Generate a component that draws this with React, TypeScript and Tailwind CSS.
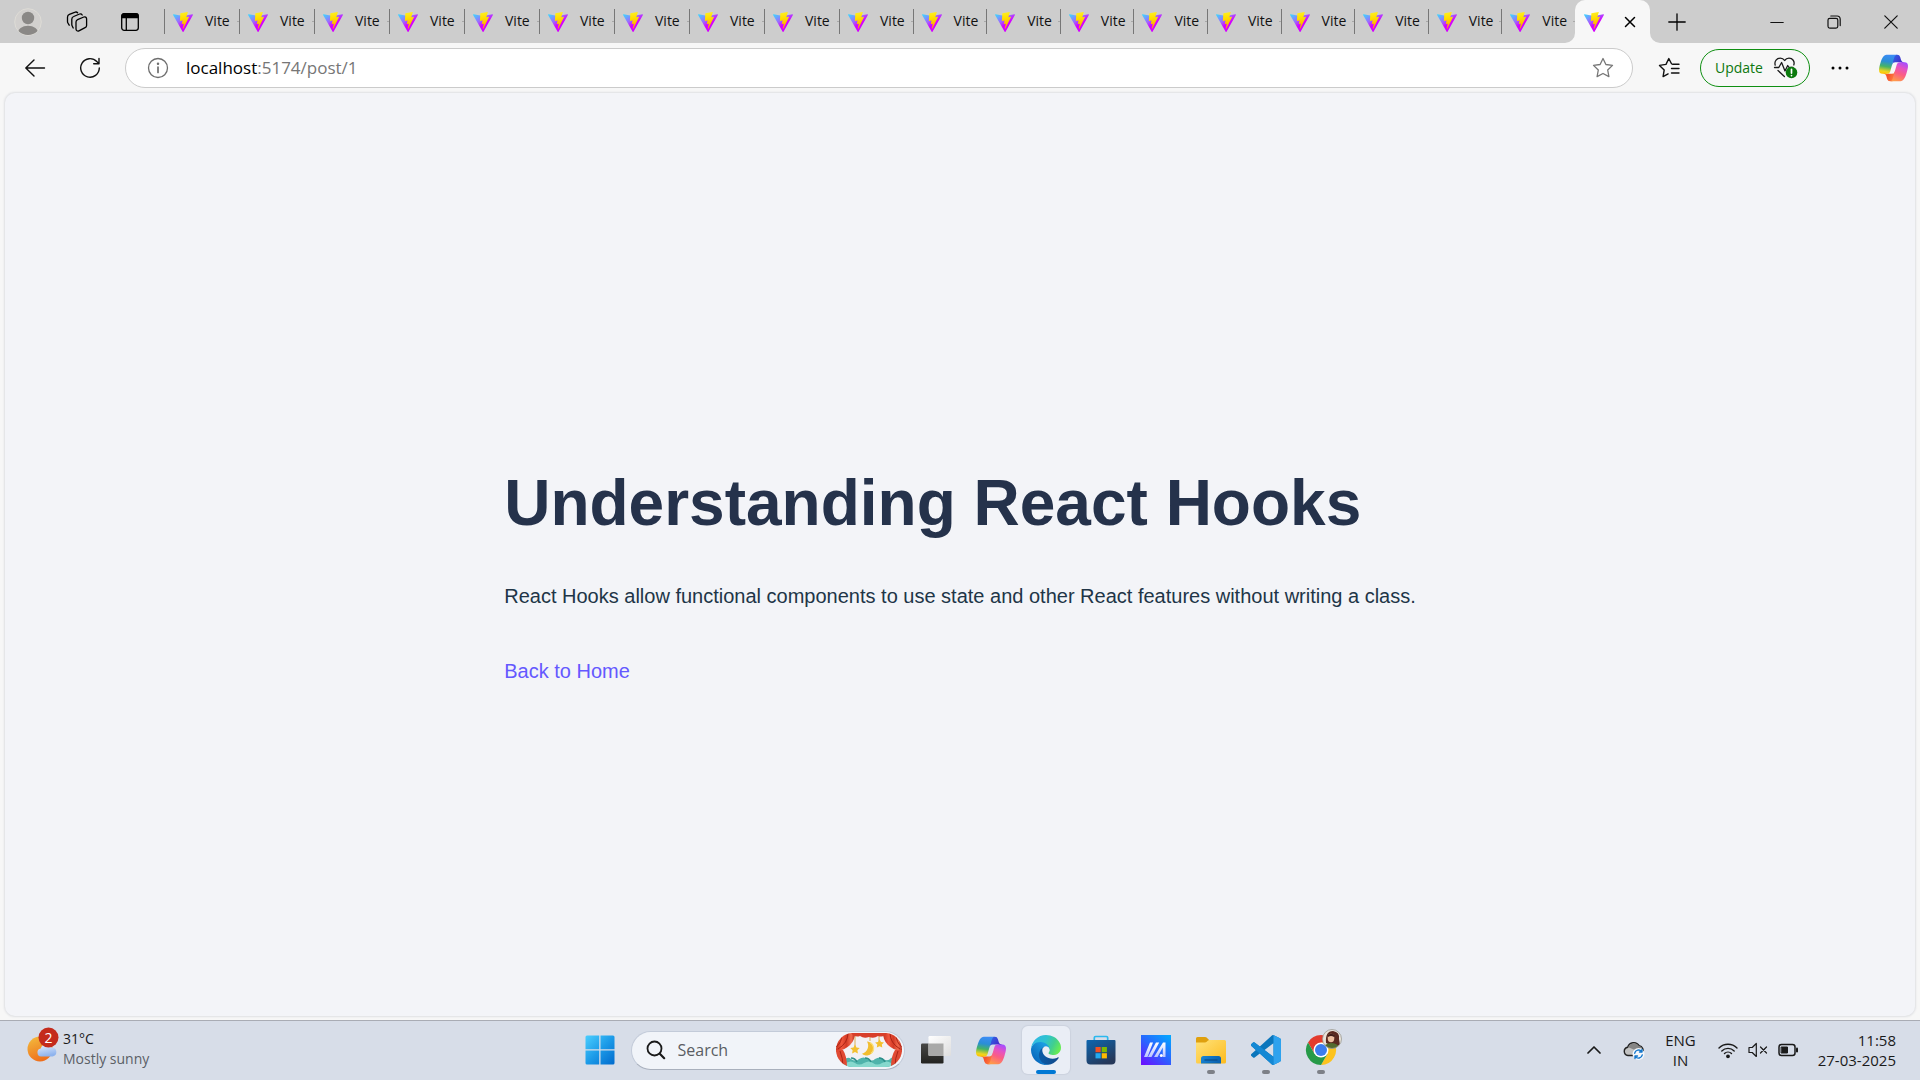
import React from "react";

const ui = "font-['Open_Sans','Noto_Sans',sans-serif]";

function ViteLogo({ id }: { id: string }) {
  return (
    <svg viewBox="0 0 256 257" className="size-5 shrink-0" aria-hidden="true">
      <defs>
        <linearGradient id={`${id}a`} x1="0%" y1="8%" x2="57.6%" y2="78.4%">
          <stop offset="0" stopColor="#41d1ff" />
          <stop offset="0.5" stopColor="#a066ff" />
          <stop offset="0.8" stopColor="#d400ff" />
          <stop offset="1" stopColor="#d400ff" />
        </linearGradient>
        <linearGradient id={`${id}b`} x1="43.4%" y1="2.2%" x2="50.3%" y2="89%">
          <stop offset="0" stopColor="#ffee20" />
          <stop offset="0.4" stopColor="#ffdd00" />
          <stop offset="1" stopColor="#ffa800" />
        </linearGradient>
      </defs>
      <path
        fill={`url(#${id}a)`}
        d="M255.153 37.938L134.897 252.976c-2.483 4.44-8.862 4.466-11.382.048L.875 37.958c-2.746-4.814 1.371-10.646 6.827-9.67l120.385 21.517a6.537 6.537 0 0 0 2.322-.004l117.867-21.483c5.438-.991 9.574 4.796 6.877 9.62Z"
      />
      <path
        fill={`url(#${id}b)`}
        d="M185.432.063L96.44 17.501a3.268 3.268 0 0 0-2.634 3.014l-5.474 92.456a3.268 3.268 0 0 0 3.997 3.378l24.777-5.718c2.318-.535 4.413 1.507 3.936 3.838l-7.361 36.047c-.495 2.426 1.782 4.5 4.151 3.78l15.304-4.649c2.372-.72 4.652 1.36 4.15 3.788l-11.698 56.621c-.732 3.542 3.979 5.473 5.943 2.437l1.313-2.028l72.516-144.72c1.215-2.423-.88-5.186-3.54-4.672l-25.505 4.922c-2.396.462-4.435-1.77-3.759-4.114l16.646-57.705c.677-2.35-1.37-4.583-3.769-4.113Z"
      />
    </svg>
  );
}

function CopilotLogo({ id, className }: { id: string; className: string }) {
  return (
    <svg viewBox="2 3 44 42" className={className} aria-hidden="true">
      <defs>
        <linearGradient id={`${id}a`} x1="0" y1="0" x2="1" y2="0.6">
          <stop offset="0" stopColor="#2b6ce8" />
          <stop offset="1" stopColor="#4a1fc4" />
        </linearGradient>
        <linearGradient id={`${id}b`} x1="0" y1="0" x2="1" y2="0.4">
          <stop offset="0" stopColor="#ffa53d" />
          <stop offset="0.5" stopColor="#f4502c" />
          <stop offset="1" stopColor="#ff7a3c" />
        </linearGradient>
        <linearGradient id={`${id}c`} x1="0.5" y1="0" x2="0.35" y2="1">
          <stop offset="0" stopColor="#3b8cf5" />
          <stop offset="0.35" stopColor="#2a8ed6" />
          <stop offset="0.62" stopColor="#45b465" />
          <stop offset="0.88" stopColor="#f0d420" />
          <stop offset="1" stopColor="#ffc400" />
        </linearGradient>
        <linearGradient id={`${id}d`} x1="0.75" y1="0" x2="0.35" y2="1">
          <stop offset="0" stopColor="#a64dff" />
          <stop offset="0.3" stopColor="#e452c4" />
          <stop offset="0.6" stopColor="#fb5d84" />
          <stop offset="1" stopColor="#ff9a4a" />
        </linearGradient>
      </defs>
      <path fill={`url(#${id}a)`} d="M34.142 7.325A4.63 4.63 0 0 0 29.7 4H28.35a4.63 4.63 0 0 0-4.554 3.794L21.48 20.407l.575-1.965a4.63 4.63 0 0 1 4.444-3.33h7.853l3.294 1.282 3.175-1.283h-.926a4.63 4.63 0 0 1-4.443-3.325l-1.31-4.461z" />
      <path fill={`url(#${id}b)`} d="M14.33 40.656A4.63 4.63 0 0 0 18.779 44h2.87a4.63 4.63 0 0 0 4.629-4.51l.312-12.163-.654 2.233a4.63 4.63 0 0 1-4.443 3.329h-7.919l-2.823-1.532-3.057 1.532h.912a4.63 4.63 0 0 1 4.447 3.344l1.279 4.423z" />
      <path fill={`url(#${id}c)`} d="M29.5 4H13.46c-4.583 0-7.332 6.057-9.165 12.113-2.172 7.176-5.014 16.775 3.207 16.775h6.925a4.63 4.63 0 0 0 4.456-3.358 2078 2078 0 0 1 4.971-17.156c.843-2.843 1.544-5.284 2.621-6.805C27.08 4.717 28.086 4 29.5 4z" />
      <path fill={`url(#${id}d)`} d="M18.498 44h16.04c4.582 0 7.332-6.058 9.165-12.115 2.171-7.177 5.013-16.777-3.208-16.777h-6.926a4.63 4.63 0 0 0-4.455 3.358 2084 2084 0 0 1-4.972 17.16c-.842 2.843-1.544 5.285-2.62 6.806-.604.852-1.61 1.568-3.024 1.568z" />
    </svg>
  );
}

const line = { fill: "none", stroke: "currentColor", strokeLinecap: "round", strokeLinejoin: "round" } as const;

function ProfileIcon() {
  return (
    <svg viewBox="0 0 28 28" className="size-7" aria-hidden="true">
      <defs>
        <clipPath id="avatarClip"><circle cx="14" cy="14" r="13" /></clipPath>
      </defs>
      <circle cx="14" cy="14" r="13.3" fill="#d2d0ce" stroke="#dedcd6" />
      <g clipPath="url(#avatarClip)" fill="#8a8886">
        <circle cx="14" cy="10" r="6.2" />
        <ellipse cx="14" cy="25.5" rx="10.5" ry="7.7" />
      </g>
    </svg>
  );
}

function WorkspacesIcon() {
  return (
    <svg viewBox="0 0 22 22" className="size-[22px]" {...line} strokeWidth="1.3" aria-hidden="true">
      <path d="M11.6 8.6 17.8 6a2 2 0 0 1 2.8 1.8v6.6a2.4 2.4 0 0 1-1.5 2.2l-6.2 3.2A2 2 0 0 1 10 18v-7a2.6 2.6 0 0 1 1.6-2.400z" />
      <path d="M7.200 17 6.200 15a3 3 0 0 1-.4-1.400V8.300a3 3 0 0 1 1.900-2.800L13.600 3a2.200 2.200 0 0 1 2.600 1" />
      <path d="M3.200 14.200 1.900 12a3 3 0 0 1-.400-1.500V6.200a3 3 0 0 1 1.900-2.800L9.200 1.200A2.200 2.200 0 0 1 11.600 1.700" />
    </svg>
  );
}

function TabActionsIcon() {
  return (
    <svg viewBox="0 0 20 20" className="size-5" {...line} strokeWidth="1.3" aria-hidden="true">
      <rect x="1.7" y="1.7" width="16.6" height="16.6" rx="2.5" />
      <path d="M2 5.500V3.500Q2 2 3.500 2h13Q18 2 18 3.500v2z" fill="currentColor" />
      <path d="M6.300 6v12" />
    </svg>
  );
}

const tabs = Array.from({ length: 19 }, (_, i) => i);

function TabStrip() {
  return (
    <header className="flex h-[43px] items-stretch bg-[#cdcdcd]">
      <div className="flex w-[164px] shrink-0 items-center text-black">
        <button aria-label="Profile" className="ml-3.5 flex w-7 items-center justify-center"><ProfileIcon /></button>
        <button aria-label="Workspaces" className="ml-6 flex w-[22px] items-center justify-center"><WorkspacesIcon /></button>
        <button aria-label="Tab actions menu" className="ml-8 flex w-5 items-center justify-center"><TabActionsIcon /></button>
      </div>
      <nav aria-label="Tabs" className="flex min-w-0 max-w-[1411px] flex-1 items-center">
        {tabs.map((i) => (
          <button
            key={i}
            className={`${i < 9 ? "w-[75px] shrink-0" : "min-w-0 flex-1"} flex h-[25px] items-center border-l border-[#777777]`}
          >
            <span className="flex min-w-0 flex-1 items-center gap-3 overflow-hidden pl-2">
              <ViteLogo id={`vite${i}`} />
              <span className="whitespace-nowrap pb-0.5 text-sm leading-5 text-[#111111]">Vite</span>
            </span>
            <span className="h-px w-0.5 shrink-0 bg-[#a8a8a8]" />
          </button>
        ))}
      </nav>
      <div className="relative flex w-[75px] shrink-0 items-center rounded-t-[10px] bg-[#f7f7f7] pl-[9px]">
        <svg viewBox="0 0 10 10" className="absolute -left-2.5 bottom-0 size-2.5" aria-hidden="true">
          <path d="M10 0v10H0A10 10 0 0 0 10 0z" fill="#f7f7f7" />
        </svg>
        <svg viewBox="0 0 10 10" className="absolute -right-2.5 bottom-0 size-2.5" aria-hidden="true">
          <path d="M0 0v10h10A10 10 0 0 1 0 0z" fill="#f7f7f7" />
        </svg>
        <button aria-label="Current tab"><ViteLogo id="viteActive" /></button>
        <button aria-label="Close tab" className="ml-5">
          <svg viewBox="0 0 12 12" className="size-3" {...line} strokeWidth="1.5" aria-hidden="true">
            <path d="M1.500 1.500l9 9M10.500 1.500l-9 9" />
          </svg>
        </button>
      </div>
      <button aria-label="New tab" className="ml-[18px] shrink-0">
        <svg viewBox="0 0 18 18" className="size-[18px]" {...line} strokeWidth="1.3" aria-hidden="true">
          <path d="M9 .8v16.400M.8 9h16.400" />
        </svg>
      </button>
      <div className="ml-auto flex shrink-0 items-stretch text-[#111111]">
        <button aria-label="Minimize" className="flex w-[57px] items-center justify-center">
          <svg viewBox="0 0 14 14" className="size-3.5" {...line} strokeWidth="1.2" aria-hidden="true"><path d="M.8 7.500h12.400" /></svg>
        </button>
        <button aria-label="Restore" className="flex w-[57px] items-center justify-center">
          <svg viewBox="0 0 14 14" className="size-3.5" {...line} strokeWidth="1.2" aria-hidden="true">
            <rect x="1" y="3.300" width="9.800" height="9.800" rx="1.800" />
            <path d="M3.800 1H10a3.200 3.200 0 0 1 3.200 3.200v6.400" />
          </svg>
        </button>
        <button aria-label="Close window" className="flex w-[58px] items-center justify-center">
          <svg viewBox="0 0 14 14" className="size-3.5" {...line} strokeWidth="1.2" aria-hidden="true"><path d="M.8.8l12.400 12.400M13.200.8L.8 13.200" /></svg>
        </button>
      </div>
    </header>
  );
}

function Toolbar() {
  return (
    <div className="flex h-[50px] items-center bg-[#f7f7f7] text-[#111111]">
      <button aria-label="Back" className="ml-6 shrink-0">
        <svg viewBox="0 0 22 20" className="h-5 w-[22px]" {...line} strokeWidth="1.4" aria-hidden="true">
          <path d="M10 2L1.800 10l8.200 8M2 10h18.500" />
        </svg>
      </button>
      <button aria-label="Refresh" className="ml-[33px] shrink-0">
        <svg viewBox="0 0 22 22" className="size-[22px]" {...line} strokeWidth="1.4" aria-hidden="true">
          <path d="M20.300 11A9.300 9.300 0 1 1 17.800 4.600L20 6.800M20 1.500v5.300h-5.300" />
        </svg>
      </button>
      <form className="ml-6 flex h-10 min-w-0 flex-1 items-center rounded-full border border-[#cbcbcb] bg-white">
        <button type="button" aria-label="Site information" className="ml-[21px] shrink-0 text-[#6e6e6e]">
          <svg viewBox="0 0 22 22" className="size-[22px]" {...line} strokeWidth="1.3" aria-hidden="true">
            <circle cx="11" cy="11" r="9.500" />
            <path d="M11 10v5.500" strokeWidth="1.700" />
            <circle cx="11" cy="6.800" r="0.600" fill="currentColor" />
          </svg>
        </button>
        <a href="#address" aria-label="Address" className="ml-[17px] min-w-0 flex-1 truncate text-[17px] leading-6 text-[#767676]">
          <span className="text-black">localhost</span>:5174/post/1
        </a>
        <button type="button" aria-label="Add to favorites" className="mr-[18px] shrink-0 text-[#767676]">
          <svg viewBox="0 0 22 22" className="size-[22px]" {...line} strokeWidth="1.3" aria-hidden="true">
            <path d="M11 1.500l2.900 6 6.600.9-4.800 4.600 1.200 6.600L11 16.500l-5.900 3.100 1.200-6.600L1.500 8.400l6.600-.9z" />
          </svg>
        </button>
      </form>
      <button aria-label="Favorites" className="ml-[25px] shrink-0">
        <svg viewBox="0 0 22 22" className="size-[22px]" {...line} strokeWidth="1.4" aria-hidden="true">
          <path d="M13.500 6.800 10.800 1.500 8 7.400l-6.500 1 4.700 4.500-1.100 6.700 5-2.700M14.500 7.200h6.500M13.500 11.500H21M13.500 16H21" />
        </svg>
      </button>
      <button className="ml-5 flex h-[38px] shrink-0 items-center rounded-full border border-[#0f8f12] pl-3.5 pr-2.5 text-sm font-medium leading-5 text-[#0d770f]">
        <span className="w-12 text-left">Update</span>
        <svg viewBox="0 0 26 24" className="ml-2.5 h-6 w-[26px]" {...line} strokeWidth="1.3" aria-hidden="true">
          <g stroke="#1b1b1b">
            <path d="M2.200 9.200C1 5 4 2.200 7.200 2.200c2 0 3.500.9 4.400 2.300C12.600 3.100 14.100 2.200 16 2.200c3.600 0 6 3.200 4.800 6.800" />
            <path d="M1.500 11.500h4.300l2.800-5 3.400 8.500 2.700-5.500 1.300 2h4" />
            <path d="M5 14.500l6.400 6" />
          </g>
          <circle cx="18.500" cy="16.500" r="5.800" fill="#0b7a0d" stroke="none" />
          <path d="M18.500 13.300v3.800M18.500 19.500v.1" stroke="#fff" strokeWidth="1.700" />
        </svg>
      </button>
      <button aria-label="Settings and more" className="ml-[21px] shrink-0">
        <svg viewBox="0 0 18 4" className="h-1 w-[18px]" aria-hidden="true">
          <circle cx="2" cy="2" r="1.500" /><circle cx="9" cy="2" r="1.500" /><circle cx="16" cy="2" r="1.500" />
        </svg>
      </button>
      <button aria-label="Copilot" className="ml-[30px] mr-3 shrink-0"><CopilotLogo id="cpTop" className="h-7 w-[29px]" /></button>
    </div>
  );
}

function WeatherIcon() {
  return (
    <svg viewBox="0 0 34 36" className="h-9 w-[34px] shrink-0" aria-hidden="true">
      <defs>
        <linearGradient id="sun" x1="0.2" y1="0" x2="0.6" y2="1">
          <stop offset="0" stopColor="#f3b93c" /><stop offset="1" stopColor="#ee6c1b" />
        </linearGradient>
        <linearGradient id="cloud" x1="0" y1="0" x2="0.3" y2="1">
          <stop offset="0" stopColor="#e8f1ff" /><stop offset="1" stopColor="#8fb4ee" />
        </linearGradient>
      </defs>
      <circle cx="13" cy="22" r="12.500" fill="url(#sun)" />
      <path d="M14 29.500a4 4 0 0 1-.3-7.900 6 6 0 0 1 11-1.200 4.600 4.600 0 0 1 1 9.100z" fill="url(#cloud)" />
      <circle cx="21.500" cy="10.500" r="10" fill="#c42b1c" />
      <text x="21.500" y="15.500" textAnchor="middle" fontSize="14" fill="#fff" fontFamily="Open Sans, sans-serif">2</text>
    </svg>
  );
}

function StartIcon() {
  return (
    <svg viewBox="0 0 30 30" className="size-[30px]" aria-hidden="true">
      <defs>
        <linearGradient id="win" gradientUnits="userSpaceOnUse" x1="0" y1="0" x2="30" y2="30">
          <stop offset="0" stopColor="#4cd0ff" /><stop offset="0.500" stopColor="#1c9be8" /><stop offset="1" stopColor="#0069cc" />
        </linearGradient>
      </defs>
      <path fill="url(#win)" d="M2 .5h12.200v13.700H.5V2A1.500 1.500 0 0 1 2 .5zM15.500.5H28A1.500 1.500 0 0 1 29.500 2v12.200h-14zM.5 15.500h13.700v14H2A1.500 1.500 0 0 1 .5 28zM15.500 15.500h14V28a1.500 1.500 0 0 1-1.500 1.500H15.500z" />
    </svg>
  );
}

function TheatreIcon() {
  return (
    <svg viewBox="0 0 66 34" className="h-[34px] w-[66px] shrink-0" aria-hidden="true">
      <defs>
        <clipPath id="stage"><rect width="66" height="34" rx="17" /></clipPath>
        <linearGradient id="drape" x1="0" y1="0" x2="1" y2="0">
          <stop offset="0" stopColor="#c9321f" /><stop offset="0.300" stopColor="#f0563c" /><stop offset="0.550" stopColor="#d43b26" /><stop offset="0.800" stopColor="#f26a4c" /><stop offset="1" stopColor="#b92a1b" />
        </linearGradient>
      </defs>
      <g clipPath="url(#stage)">
        <rect width="66" height="34" fill="#f3f1f4" />
        <path d="M19 0v14M34 0v8M43 0v9" stroke="#d9a94a" strokeWidth="0.900" />
        <path d="M8 27q4-4 7-1 5 3 8 0 5-3 8 0 5 3 8 0 5-3 8 0 5 3 8-1 3-2 5 1v9H6z" fill="#4fb3ab" />
        <path d="M10 30q5-3 9 0t9 0 9 0 9 0 9 0v5H10z" fill="#86d8cd" />
        <path d="M15 25q4 0 6 4M29 25q4 0 6 4M43 25q4 0 6 4" stroke="#2f8f8a" strokeWidth="1.600" fill="none" />
        <path d="M19 11.500l1.500 2.900 3.200.5-2.300 2.300.5 3.300-2.900-1.500-2.900 1.500.5-3.300-2.300-2.300 3.200-.5z" fill="#f3c02f" />
        <path d="M43.500 6.300l1.500 2.700 3 .4-2.200 2.200.5 3-2.800-1.400-2.700 1.400.5-3-2.200-2.200 3-.4z" fill="#f3c02f" />
        <path d="M31 8.500a7 7 0 1 1-5 12.200A8.200 8.200 0 0 0 31 8.500z" fill="#f2bd2f" />
        <path d="M34 9.500a6.500 6.500 0 0 1 1 11" stroke="#fbe07a" strokeWidth="1.200" fill="none" />
        <path d="M0 0h19q0 14-19 19z" fill="url(#drape)" />
        <path d="M66 0H47q0 14 19 19z" fill="url(#drape)" />
        <path d="M15 0h36q-3 5-9 3-4 3-9 1-5 2-9-1-5 2-9-3z" fill="#d83f2a" />
        <path d="M0 17l7 0q4 6 4 17H0zM66 17h-7q-4 6-4 17h11z" fill="#e04a33" />
        <path d="M4 18q3 7 3 16M62 18q-3 7-3 16M6 0q0 10-6 14M12 0q0 10-10 16M60 0q0 10 6 14M54 0q0 10 10 16" stroke="#aa2416" strokeWidth="1" fill="none" />
      </g>
    </svg>
  );
}

function TaskViewIcon() {
  return (
    <svg viewBox="0 0 30 30" className="size-[30px]" aria-hidden="true">
      <defs>
        <linearGradient id="tvl" x1="0" y1="0" x2="1" y2="1"><stop offset="0" stopColor="#ffffff" /><stop offset="1" stopColor="#dedede" /></linearGradient>
        <linearGradient id="tvd" x1="0" y1="0" x2="0" y2="1"><stop offset="0" stopColor="#484846" /><stop offset="1" stopColor="#232320" /></linearGradient>
      </defs>
      <rect x="0" y="8.500" width="22.500" height="20" rx="1.200" fill="url(#tvd)" />
      <rect x="7.500" y="1" width="22.500" height="20" rx="1.200" fill="url(#tvl)" />
      <path d="M7.500 8.500h15V21h-14a1 1 0 0 1-1-1z" fill="#a9a9a8" />
    </svg>
  );
}

function EdgeLogo() {
  return (
    <svg viewBox="0 0 256 256" className="size-[30px]" aria-hidden="true">
      <defs>
        <linearGradient id="ed1" x1="0.200" y1="0.500" x2="1" y2="0.600"><stop offset="0" stopColor="#0c59a4" /><stop offset="1" stopColor="#114a8b" /></linearGradient>
        <linearGradient id="ed2" x1="0.800" y1="0.250" x2="0.300" y2="0.850"><stop offset="0" stopColor="#1b9de2" /><stop offset="0.400" stopColor="#1588d2" /><stop offset="1" stopColor="#0a6cc0" /></linearGradient>
        <linearGradient id="ed3" x1="0" y1="0.200" x2="1" y2="0.550"><stop offset="0" stopColor="#30b6e8" /><stop offset="0.450" stopColor="#2fc3d0" /><stop offset="0.750" stopColor="#42cf8e" /><stop offset="1" stopColor="#66eb55" /></linearGradient>
      </defs>
      <g transform="translate(-4.630 -4.920)">
        <path fill="url(#ed1)" d="M235.680 195.460a93.730 93.730 0 0 1-10.540 4.710 101.870 101.870 0 0 1-35.900 6.460c-47.320 0-88.540-32.550-88.540-74.320A31.480 31.480 0 0 1 117.130 105c-42.800 1.800-53.800 46.400-53.800 72.530 0 73.880 68.090 81.370 82.760 81.370 7.910 0 19.840-2.300 27-4.560l1.310-.44a128.340 128.340 0 0 0 66.600-52.800 4 4 0 0 0-5.320-5.640z" />
        <path fill="url(#ed2)" d="M110.340 246.340A79.200 79.200 0 0 1 87.600 225a80.720 80.720 0 0 1 29.530-120c3.120-1.470 8.450-4.130 15.540-4a32.350 32.350 0 0 1 25.690 13 31.880 31.880 0 0 1 6.360 18.660c0-.21 24.460-79.600-80-79.600-43.900 0-80 41.660-80 78.210a130.150 130.150 0 0 0 12.110 56 128 128 0 0 0 156.380 67.110 75.550 75.550 0 0 1-62.780-8z" />
        <path fill="url(#ed3)" d="M156.940 153.780c-.81 1.050-3.300 2.500-3.300 5.660 0 2.610 1.700 5.120 4.720 7.230 14.380 10 41.490 8.680 41.560 8.680a59.560 59.560 0 0 0 30.270-8.350 61.380 61.380 0 0 0 30.430-52.880c.26-22.410-8-37.310-11.340-43.910-21.190-41.450-66.930-65.290-116.670-65.290a128 128 0 0 0-128 126.200c.48-36.540 36.800-66.050 80-66.050 3.500 0 23.460.34 42 10.070 16.340 8.580 24.900 18.940 30.850 29.210 6.180 10.670 7.280 24.150 7.280 29.520s-2.740 13.330-7.800 19.910z" />
      </g>
    </svg>
  );
}

function StoreIcon() {
  return (
    <svg viewBox="0 0 30 30" className="size-[30px]" aria-hidden="true">
      <defs>
        <linearGradient id="store" x1="0" y1="0" x2="0.600" y2="1"><stop offset="0" stopColor="#0c66b0" /><stop offset="1" stopColor="#263859" /></linearGradient>
      </defs>
      <path d="M8.300 6V2.800A1.300 1.300 0 0 1 9.600 1.500h10.800a1.300 1.300 0 0 1 1.300 1.300V6" fill="none" stroke="#2cb9ee" strokeWidth="1.700" />
      <path d="M1.500 5h27a1 1 0 0 1 1 1v19.500a4 4 0 0 1-4 4h-21a4 4 0 0 1-4-4V6a1 1 0 0 1 1-1z" fill="url(#store)" />
      <path d="M9.500 12h5.200v5.200H9.500z" fill="#f25022" /><path d="M15.700 12h5.200v5.200h-5.200z" fill="#7fba00" />
      <path d="M9.500 18.200h5.200v5.200H9.500z" fill="#22aaf0" /><path d="M15.700 18.200h5.200v5.200h-5.200z" fill="#ffb900" />
    </svg>
  );
}

function ArmouryIcon() {
  return (
    <svg viewBox="0 0 30 30" className="size-[30px]" aria-hidden="true">
      <defs>
        <linearGradient id="asus" x1="0.900" y1="0" x2="0.100" y2="1"><stop offset="0" stopColor="#05a5ff" /><stop offset="0.500" stopColor="#2a63ff" /><stop offset="1" stopColor="#6a11ff" /></linearGradient>
        <linearGradient id="asusM" x1="0" y1="0" x2="0" y2="1"><stop offset="0" stopColor="#ffffff" /><stop offset="1" stopColor="#b9c4ff" /></linearGradient>
      </defs>
      <path d="M0 0h30v30H0z" fill="url(#asus)" />
      <path fill="url(#asusM)" d="M9 7.500h3L6.500 22H3zM15 7.500h3.200L10.500 22H7zM22 7.500h2.500V22h-2.700V12.500L16.500 22H13z" />
      <circle cx="20.300" cy="20.500" r="1.500" fill="#fff" />
    </svg>
  );
}

function FolderIcon() {
  return (
    <svg viewBox="0 0 30 30" className="size-[30px]" aria-hidden="true">
      <defs>
        <linearGradient id="fold" x1="0" y1="0" x2="1" y2="1"><stop offset="0" stopColor="#ffe27a" /><stop offset="1" stopColor="#fdbb1d" /></linearGradient>
        <linearGradient id="foldB" x1="0" y1="0" x2="1" y2="0.300"><stop offset="0" stopColor="#1987d8" /><stop offset="1" stopColor="#0a62b0" /></linearGradient>
      </defs>
      <path d="M0 9V3.500A1.500 1.500 0 0 1 1.500 2h7.700q.8 0 1.400.6L13.300 5.300 11 8z" fill="#dfa00e" />
      <path d="M0 7.500h9q1 0 1.700-.7L12 5.600q.6-.5 1.400-.5h15.100A1.500 1.500 0 0 1 30 6.600v20.400a1.500 1.500 0 0 1-1.500 1.500h-27A1.500 1.500 0 0 1 0 27z" fill="url(#fold)" />
      <path d="M5 28.500v-5A2.500 2.500 0 0 1 7.500 21h15a2.500 2.500 0 0 1 2.500 2.500v5z" fill="url(#foldB)" />
      <path d="M8.500 25h13" stroke="#0b4a86" strokeWidth="1.200" />
    </svg>
  );
}

function CodeIcon() {
  return (
    <svg viewBox="0 0 24 24" className="size-[30px]" aria-hidden="true">
      <path fill="#0b76bc" d="M23.150 2.587L18.210.21a1.494 1.494 0 0 0-1.705.29l-9.460 8.630-4.120-3.128a.999.999 0 0 0-1.276.057L.327 7.261A1 1 0 0 0 .326 8.740L3.899 12 .326 15.260a1 1 0 0 0 .001 1.479L1.650 17.940a.999.999 0 0 0 1.276.057l4.120-3.128 9.460 8.630a1.492 1.492 0 0 0 1.704.29l4.942-2.377A1.500 1.500 0 0 0 24 20.060V3.939a1.500 1.500 0 0 0-.85-1.352zm-5.146 14.861L10.826 12l7.178-5.448v10.896z" />
      <path fill="#1488d4" d="M2.926 6.002 18 17.448v6.300a1.492 1.492 0 0 1-1.500-.25L.326 8.740a1 1 0 0 1 0-1.479L1.650 6.059a1 1 0 0 1 1.276-.057z" />
      <path fill="#2ea2ee" d="M18 .15q.1 0 .21.06l4.940 2.377A1.500 1.500 0 0 1 24 3.939V20.060a1.500 1.500 0 0 1-.85 1.352l-4.942 2.377-.208.060z" />
    </svg>
  );
}

function ChromeIcon() {
  return (
    <svg viewBox="-6 0 42 42" className="size-[42px]" aria-hidden="true">
      <defs>
        <clipPath id="user"><circle cx="26" cy="10" r="9.500" /></clipPath>
      </defs>
      <path d="M2 13.500A15 15 0 0 1 28 13.500L15 14 8.500 24.500z" fill="#e33b2e" />
      <path d="M28 13.500A15 15 0 0 1 15 36l6.500-11.200L15 13.500z" fill="#fcc31e" />
      <path d="M2 13.500A15 15 0 0 0 15 36l6.500-11.200H8.500z" fill="#269a48" />
      <circle cx="15" cy="21" r="7.500" fill="#fff" />
      <circle cx="15" cy="21" r="6" fill="#3c7ded" />
      <g clipPath="url(#user)">
        <circle cx="26" cy="10" r="10" fill="#e9e3da" />
        <path d="M20 14q-1-12 7-12 7 1 6 8l1 6-6 2z" fill="#5a2a1f" />
        <ellipse cx="25" cy="9" rx="3.300" ry="4.300" fill="#edc0a0" />
        <path d="M22 6q4-3 7 1l-1 1q-3-2-6 0z" fill="#42201a" />
        <path d="M17 20q2-6 8-6t9 5v3H17z" fill="#536b2e" />
      </g>
      <circle cx="26" cy="10" r="9.500" fill="none" stroke="#9b9a92" strokeWidth="0.800" />
    </svg>
  );
}

const apps = [
  { name: "Task view", icon: <TaskViewIcon />, state: "none" },
  { name: "Copilot", icon: <CopilotLogo id="cpBar" className="h-[29px] w-[30px]" />, state: "none" },
  { name: "Microsoft Edge", icon: <EdgeLogo />, state: "active" },
  { name: "Microsoft Store", icon: <StoreIcon />, state: "none" },
  { name: "MyASUS", icon: <ArmouryIcon />, state: "none" },
  { name: "File Explorer", icon: <FolderIcon />, state: "running" },
  { name: "Visual Studio Code", icon: <CodeIcon />, state: "running" },
  { name: "Google Chrome", icon: <ChromeIcon />, state: "running" },
];

function Taskbar() {
  return (
    <footer className="grid h-[60px] shrink-0 grid-cols-[1fr_auto_1fr] border-t border-[#a9acb4] bg-[#d7dde8] text-[#1a1a1a]">
      <button className="flex items-start gap-0.5 pl-[27px] pt-1.5 text-left text-sm leading-5">
        <WeatherIcon />
        <span className="block pt-0.5">
          <span className="block">31°C</span>
          <span className="block text-[#5b5f66]">Mostly sunny</span>
        </span>
      </button>
      <div className="flex items-center gap-[7px] pb-px">
        <button aria-label="Start" className="flex size-12 items-center justify-center"><StartIcon /></button>
        <label className="flex h-[39px] w-[274px] items-center rounded-full border border-[#c3cbd9] border-b-[#a9b0bd] bg-[#f1f4f9] pl-3.5 pr-0.5">
          <svg viewBox="0 0 20 20" className="size-5 shrink-0" {...line} strokeWidth="1.8" aria-hidden="true">
            <circle cx="8.500" cy="8.500" r="7" /><path d="M13.800 13.800l4.400 4.400" strokeWidth="2.200" />
          </svg>
          <input type="text" aria-label="Search" placeholder="Search" className="ml-3 min-w-0 flex-1 bg-transparent text-base leading-6 outline-none placeholder:text-[#5a5d63]" />
          <TheatreIcon />
        </label>
        {apps.map((app) => (
          <button
            key={app.name}
            aria-label={app.name}
            className={`relative flex size-12 items-center justify-center rounded-md ${app.state === "active" ? "bg-[#eaeef6] shadow-[0_0_1px_1px_#ccd2de]" : ""}`}
          >
            {app.icon}
            {app.state === "active" && <span className="absolute bottom-0 h-1 w-5 rounded-full bg-[#0078d4]" />}
            {app.state === "running" && <span className="absolute bottom-0 h-1 w-2 rounded-full bg-[#7d8087]" />}
          </button>
        ))}
      </div>
      <div className="flex items-center justify-end pb-0.5 pr-6 text-[15px] leading-5">
        <button aria-label="Show hidden icons">
          <svg viewBox="0 0 14 14" className="size-3.5" {...line} strokeWidth="1.7" aria-hidden="true"><path d="M1 10l6-6 6 6" /></svg>
        </button>
        <button aria-label="OneDrive" className="ml-[22px]">
          <svg viewBox="0 0 22 20" className="h-5 w-[22px]" aria-hidden="true">
            <path d="M5 15.500a4.200 4.200 0 0 1-.3-8.300 6.300 6.300 0 0 1 11.500-1.400 4.800 4.800 0 0 1 3.300 7.200L17 15.500z" fill="#c2c2c2" stroke="#222" strokeWidth="1.400" />
            <path d="M5.300 7.200A6 6 0 0 1 16 5.900q1.600.1 3 1.600L13 10.500z" fill="#858585" />
            <circle cx="15.500" cy="14" r="6" fill="#f4f7fb" />
            <g {...line} stroke="#1276cc" strokeWidth="1.400">
              <path d="M11.700 13.200a4 4 0 0 1 7-1.700M19 9.500v2.500h-2.500M19.300 14.900a4 4 0 0 1-7 1.700M12 18.500V16h2.500" />
            </g>
          </svg>
        </button>
        <button className="ml-5 text-center"><span className="block">ENG</span><span className="block">IN</span></button>
        <button aria-label="Network, volume and battery" className="ml-[22px] flex items-center gap-2.5">
          <svg viewBox="0 0 20 18" className="h-[18px] w-5" {...line} strokeWidth="1.4" aria-hidden="true">
            <path d="M1 7a12.800 12.800 0 0 1 18 0M3.800 9.900a8.800 8.800 0 0 1 12.400 0M6.500 12.600a5 5 0 0 1 7 0" />
            <circle cx="10" cy="15.300" r="1.200" fill="currentColor" />
          </svg>
          <svg viewBox="0 0 20 16" className="h-4 w-5" {...line} strokeWidth="1.2" aria-hidden="true">
            <path d="M1 5.500h3.200L8.300 1.500v13l-4.100-4H1zM12.500 5l6 6M18.500 5l-6 6" />
          </svg>
          <svg viewBox="0 0 20 14" className="h-3.5 w-5" {...line} strokeWidth="1.5" aria-hidden="true">
            <rect x="1" y="1.500" width="16" height="11" rx="2.500" />
            <rect x="3.500" y="4" width="6" height="6" fill="currentColor" strokeWidth="1" />
            <path d="M19 5.500v3" strokeWidth="2" />
          </svg>
        </button>
        <button className="ml-5 text-right"><span className="block">11:58</span><span className="block">27-03-2025</span></button>
      </div>
    </footer>
  );
}

export default function App() {
  return (
    <div className={`${ui} flex min-h-screen flex-col bg-[#f7f7f7]`}>
      <TabStrip />
      <Toolbar />
      <main className="mx-[5px] mb-1 flex flex-1 items-center justify-center rounded-[10px] bg-[#f3f4f8] pt-[46px] font-['Liberation_Sans',Arial,sans-serif] shadow-[0_0_2px_1px_#dfe0e3]">
        <article className="flex flex-col items-start gap-[47px] text-xl leading-7 text-[#213547]">
          <h1 className="text-[64px] font-bold leading-[64px] text-[#25324b]">Understanding React Hooks</h1>
          <p>React Hooks allow functional components to use state and other React features without writing a class.</p>
          <a href="#home" className="text-[#6458ff]">Back to Home</a>
        </article>
      </main>
      <Taskbar />
    </div>
  );
}
